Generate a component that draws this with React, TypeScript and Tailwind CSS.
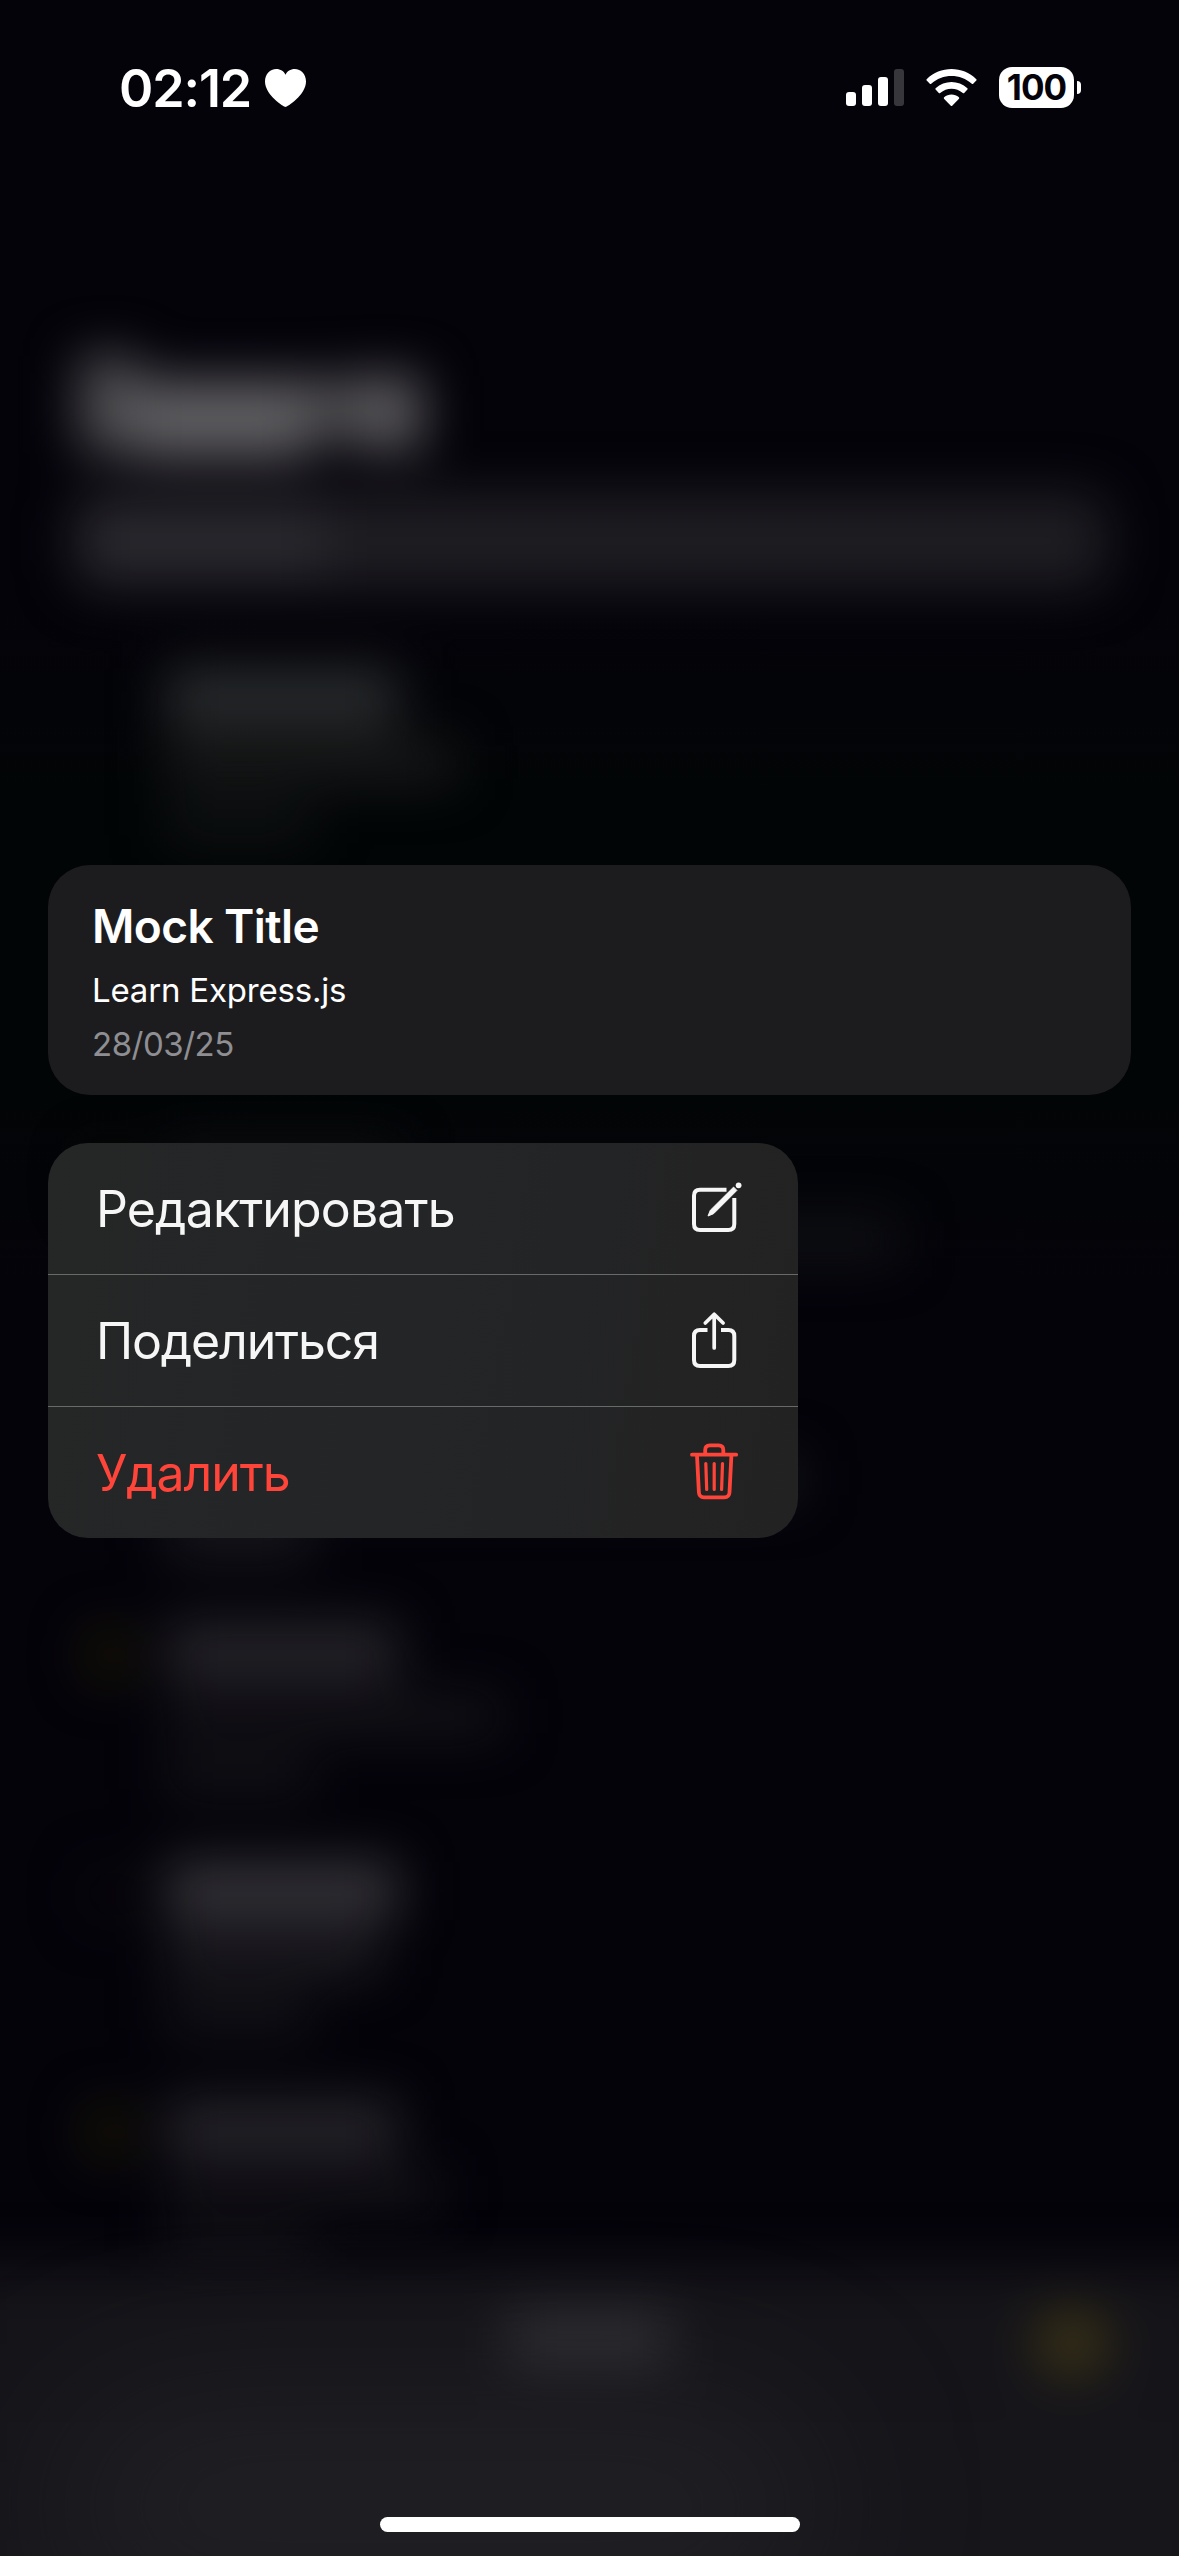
import type { ReactNode } from "react";

type Row = { title: string; body: string; date: string; marker: string };

const rows: Row[] = [
  { title: "bg-[#2a2c2e]", body: "w-[290px] bg-[#181919]", date: "bg-[#101212]", marker: "bg-transparent" },
  { title: "bg-transparent", body: "w-[240px] bg-transparent", date: "bg-transparent", marker: "bg-transparent" },
  { title: "bg-[#0e1010]", body: "w-[732px] bg-[#101115]", date: "bg-[#121316]", marker: "bg-[#080801]" },
  { title: "bg-[#222226]", body: "w-[634px] bg-[#17171c]", date: "bg-[#1a1a1f]", marker: "bg-transparent" },
  { title: "bg-[#252429]", body: "w-[335px] bg-[#131217]", date: "bg-[#131217]", marker: "bg-[#191605]" },
  { title: "bg-[#343338]", body: "w-[215px] bg-[#1d1c21]", date: "bg-[#141318]", marker: "bg-[#08070b]" },
  { title: "bg-[#252429]", body: "w-[275px] bg-[#121116]", date: "bg-[#131217]", marker: "bg-[#191605]" },
];

function BlurredList() {
  return (
    <div aria-hidden className="absolute inset-0 overflow-hidden bg-[linear-gradient(to_bottom,#04030a_0px,#04030a_600px,#020506_800px,#020506_1080px,#04030a_1300px)]">
      <div className="flex h-full flex-col blur-[26px]">
        <div className="mt-[352px] ml-[80px] flex h-[112px] w-[346px] items-start">
          <div className="mt-[4px] h-[96px] w-[56px] bg-[#505053]" />
          <div className="mt-[28px] h-[78px] w-[174px] bg-[#616063]" />
          <div className="mt-[26px] h-[62px] w-[50px] bg-[#4c4b4e]" />
          <div className="mt-[24px] h-[74px] w-[62px] bg-[#5d5c5f]" />
        </div>
        <div className="mt-[29px] ml-[72px] flex h-[96px] w-[1036px] items-center rounded-3xl bg-[#1e1d22]">
          <div className="ml-3 h-[64px] w-[240px] bg-[#2a292f]" />
        </div>
        <div className="mt-[80px] flex flex-col">
          {rows.map((row, i) => (
            <div key={i} className="flex h-[238.5px] shrink-0">
              <div className={"mt-1 ml-[84px] h-[56px] w-[50px] rounded-full " + row.marker} />
              <div className="ml-[32px] flex flex-col">
                <div className={"h-[58px] w-[232px] " + row.title} />
                <div className={"mt-[14px] h-[42px] " + row.body} />
                <div className={"mt-[20px] h-[38px] w-[146px] " + row.date} />
              </div>
            </div>
          ))}
        </div>
      </div>
      <div className="absolute -right-16 -bottom-16 -left-16 flex h-[356px] items-start bg-[linear-gradient(to_bottom,#141318,#17161b)] pt-[46px] blur-[26px]">
        <div className="ml-[572px] h-[60px] w-[162px] bg-[#2d2c31]" />
        <div className="ml-[364px] h-[66px] w-[76px] rounded-full bg-[#393216]" />
      </div>
      <div className="absolute -bottom-[60px] left-[60px] h-[220px] w-[760px] rounded-full bg-[#27272b] opacity-60 blur-[80px]" />
    </div>
  );
}

function StatusBar() {
  return (
    <header className="flex h-[176px] items-start">
      <div className="mt-[57px] ml-[119px] w-[146px] text-[52px] leading-[63px] font-semibold tracking-[-1.1px] whitespace-nowrap">02:12</div>
      <svg className="mt-[69px] h-[38px] w-[41px]" viewBox="0 0 41 38" fill="currentColor">
        <path d="M20.500 38C19 38 0 26 0 12.500C0 5 5 0 11.300 0C15.500 0 18.800 2.200 20.500 5.700C22.200 2.200 25.500 0 29.700 0C36 0 41 5 41 12.500C41 26 22 38 20.500 38Z" />
      </svg>
      <div className="mt-[69px] ml-[540px] flex h-[37px] items-end gap-[6px]">
        <span className="h-[14px] w-[10px] rounded-[3px] bg-white" />
        <span className="h-[21px] w-[10px] rounded-[3px] bg-white" />
        <span className="h-[29px] w-[10px] rounded-[3px] bg-white" />
        <span className="h-[37px] w-[10px] rounded-[3px] bg-[#37363b]" />
      </div>
      <svg className="mt-[69px] ml-[22px] h-[38px] w-[51px]" viewBox="0 0 51 38" fill="currentColor">
        <path d="M0.700 10.300C14 -3.300 37 -3.300 50.300 10.300Q50.900 11 50.300 11.600L47.200 14.800Q46.500 15.400 45.800 14.800C34.500 4.400 16.500 4.400 5.200 14.800Q4.500 15.400 3.800 14.800L0.700 11.600Q0.100 11 0.700 10.300Z" />
        <path d="M9.600 19.300C18.600 10.800 32.400 10.800 41.400 19.300Q42 20 41.400 20.600L38.200 23.900Q37.500 24.500 36.800 23.900C30.300 18.200 20.700 18.200 14.200 23.900Q13.500 24.500 12.800 23.900L9.600 20.600Q9 20 9.600 19.300Z" />
        <path d="M18.100 28.300C22.300 24.700 28.700 24.700 32.900 28.300Q33.600 29 33 29.700L26.200 36.800Q25.500 37.400 24.800 36.800L18 29.700Q17.400 29 18.100 28.300Z" />
      </svg>
      <div className="mt-[67px] ml-[22px] flex h-[41px] w-[75px] items-center justify-center rounded-[13px] bg-white text-[35px] leading-none font-bold tracking-[-0.9px] text-[#04030a]">
        100
      </div>
      <span className="mt-[81px] ml-[3px] h-[13px] w-[4px] rounded-r-full bg-white" />
    </header>
  );
}

const iconClass = "h-[131px] w-[56px] shrink-0";

function EditIcon() {
  return (
    <svg className={iconClass} viewBox="0 0 56 131" fill="none" stroke="currentColor" strokeWidth="4">
      <path d="M40.500 46.700H14Q8 46.700 8 52.700V81Q8 87 14 87H42.300Q48.300 87 48.300 81V55" />
      <path d="M22 73L24.300 67.300L47.600 44.100L50.900 47.400L27.600 70.700Z" fill="currentColor" strokeWidth="1" strokeLinejoin="round" />
      <circle cx="52.600" cy="42.300" r="2.900" fill="currentColor" stroke="none" />
    </svg>
  );
}

function ShareIcon() {
  return (
    <svg className={iconClass} viewBox="0 0 56 131" fill="none" stroke="currentColor" strokeWidth="4">
      <path d="M21.500 55H14Q8 55 8 61V85Q8 91 14 91H42.300Q48.300 91 48.300 85V61Q48.300 55 42.300 55H35" />
      <path d="M28.200 73V39.500M19.300 48L28.200 39.300L37.100 48" strokeWidth="3.700" strokeLinecap="round" strokeLinejoin="round" />
    </svg>
  );
}

function TrashIcon() {
  return (
    <svg className={iconClass} viewBox="0 0 56 131" fill="none" stroke="currentColor" strokeWidth="3.800" strokeLinecap="round" strokeLinejoin="round">
      <path d="M6 47.700H50.200M19.200 47V43Q19.200 38.400 23.800 38.400H32.700Q37.300 38.400 37.300 43V47" />
      <path d="M11 48.500L12.900 85.500Q13.200 90.300 18 90.300H38.400Q43.200 90.300 43.500 85.500L45.400 48.500" />
      <path d="M19.800 56.500L20.700 82.500M28.200 56.500V82.500M36.500 56.500L35.600 82.500" strokeWidth="3.200" />
    </svg>
  );
}

type MenuItemProps = { label: string; icon: ReactNode; className: string };

function MenuItem({ label, icon, className }: MenuItemProps) {
  return (
    <button className={"box-content flex h-[131px] w-[646px] items-center justify-between pr-[56px] pl-[48px] text-left text-[50px] leading-none " + className}>
      <span className="pt-px whitespace-nowrap">{label}</span>
      {icon}
    </button>
  );
}

export default function App() {
  return (
    <div className="relative h-[2556px] w-[1179px] overflow-hidden bg-[#04030a] font-['Inter','Liberation_Sans',sans-serif] text-white">
      <BlurredList />
      <div className="relative flex h-full flex-col">
        <StatusBar />
        <main className="mt-[689px] flex flex-col gap-[48px] pl-[48px]">
          <article className="flex h-[230px] w-[1083px] flex-col rounded-[42px] bg-[#1c1c1e] pt-[33px] pl-[44px] whitespace-nowrap">
            <h1 className="text-[46px] leading-[56px] font-semibold tracking-[-0.6px]">Mock Title</h1>
            <p className="mt-[15px] text-[33px] leading-[42px] tracking-[-0.2px]">Learn Express.js</p>
            <p className="mt-[12px] text-[33px] leading-[42px] tracking-[-0.5px] text-[#8e8e93]">28/03/25</p>
          </article>
          <nav className="flex w-[750px] flex-col divide-y divide-[#686969] overflow-hidden rounded-[40px] bg-[linear-gradient(100deg,#252626,#242527_50%,#222222)]">
            <MenuItem label="Редактировать" icon={<EditIcon />} className="tracking-[-0.85px] text-[#f6f6f6]" />
            <MenuItem label="Поделиться" icon={<ShareIcon />} className="tracking-[-1.15px] text-[#f6f6f6]" />
            <MenuItem label="Удалить" icon={<TrashIcon />} className="tracking-[-1.1px] text-[#ff4539]" />
          </nav>
        </main>
        <div className="mt-auto mb-[24px] h-[15px] w-[420px] self-center rounded-full bg-white" />
      </div>
    </div>
  );
}
